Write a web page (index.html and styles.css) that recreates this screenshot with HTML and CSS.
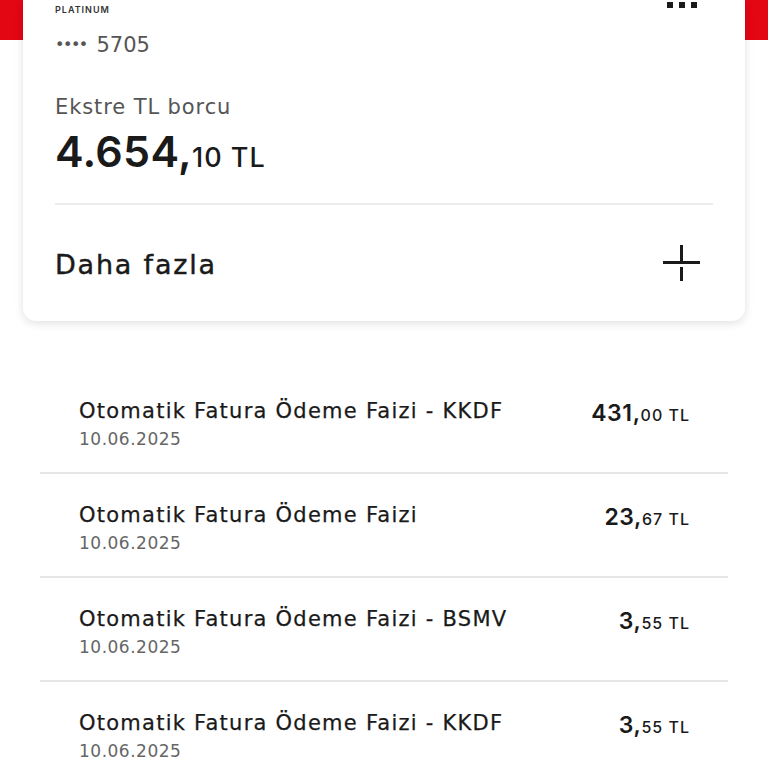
FILE: index.html
```html
<!DOCTYPE html>
<html lang="tr">
<head>
<meta charset="utf-8">
<title>Kart</title>
<link rel="stylesheet" href="styles.css">
</head>
<body>
<div class="page">
  <div class="band"></div>
  <section class="card">
    <div class="card-head">
      <span class="tier">PLATINUM</span>
      <span class="more"><i></i><i></i><i></i></span>
    </div>
    <div class="cardno"><span class="mask">••••</span> 5705</div>
    <div class="label">Ekstre TL borcu</div>
    <div class="debt"><span class="big">4.654,</span><span class="small">10 TL</span></div>
    <div class="sep"></div>
    <div class="more-row">
      <span class="more-text">Daha fazla</span>
      <svg class="plus" width="38" height="38" viewBox="0 0 38 38">
        <rect x="0" y="16" width="37" height="3" fill="#1a1a1a"/>
        <rect x="17" y="0" width="3" height="18" fill="#1a1a1a"/>
        <rect x="17" y="22" width="3" height="14" fill="#1a1a1a"/>
      </svg>
    </div>
  </section>

  <ul class="list">
    <li class="row">
      <div class="info">
        <div class="title">Otomatik Fatura Ödeme Faizi - KKDF</div>
        <div class="date">10.06.2025</div>
      </div>
      <div class="amount"><span class="int">431,</span><span class="dec">00 TL</span></div>
    </li>
    <li class="row">
      <div class="info">
        <div class="title">Otomatik Fatura Ödeme Faizi</div>
        <div class="date">10.06.2025</div>
      </div>
      <div class="amount"><span class="int">23,</span><span class="dec">67 TL</span></div>
    </li>
    <li class="row">
      <div class="info">
        <div class="title">Otomatik Fatura Ödeme Faizi - BSMV</div>
        <div class="date">10.06.2025</div>
      </div>
      <div class="amount"><span class="int">3,</span><span class="dec">55 TL</span></div>
    </li>
    <li class="row">
      <div class="info">
        <div class="title">Otomatik Fatura Ödeme Faizi - KKDF</div>
        <div class="date">10.06.2025</div>
      </div>
      <div class="amount"><span class="int">3,</span><span class="dec">55 TL</span></div>
    </li>
  </ul>
</div>
</body>
</html>
```

FILE: styles.css
```css
* { box-sizing: border-box; }
html, body { margin: 0; padding: 0; background: #ffffff; }
body {
  font-family: "DejaVu Sans", "Inter", sans-serif;
  color: #1a1a1a;
  width: 768px;
  overflow: hidden;
}
.page { width: 768px; }
.band { height: 40px; background: #e30613; }
.card {
  margin: -40px 23px 0 23px;
  background: #ffffff;
  border-radius: 0 0 13px 13px;
  box-shadow: 0 2px 10px rgba(0,0,0,0.13);
  padding: 0 32px 0 32px;
  height: 321px;
}
.card-head {
  display: flex;
  justify-content: space-between;
  align-items: flex-start;
  height: 20px;
}
.tier {
  font-family: "Inter", sans-serif;
  font-size: 9px;
  font-weight: 600;
  letter-spacing: 1px;
  color: #333;
  line-height: 12px;
  margin-top: 4px;
}
.more { display: flex; gap: 6px; margin: 2px 16px 0 0; }
.more i { display: block; width: 6px; height: 6px; background: #1a1a1a; }
.cardno {
  font-size: 21px;
  color: #555;
  line-height: 28px;
  margin-top: 11px;
}
.mask { font-size: 16px; letter-spacing: -1.5px; margin-right: 3px; position: relative; top: -2px; }
.label {
  font-size: 21px;
  color: #555;
  line-height: 28px;
  margin-top: 32px;
  letter-spacing: 0.9px;
}
.debt { margin-top: 6px; line-height: 48px; color: #1a1a1a; font-family: "Inter", sans-serif; }
.big { font-size: 43px; font-weight: 600; letter-spacing: 0.3px; }
.small { font-size: 27px; font-weight: 500; letter-spacing: 1px; }
.sep { height: 2px; background: #ececec; margin-top: 18px; }
.more-row {
  display: flex;
  justify-content: space-between;
  align-items: center;
  height: 118px;
}
.more-text { font-size: 27px; font-weight: 400; color: #1a1a1a; letter-spacing: 1.8px; -webkit-text-stroke: 0.45px #1a1a1a; }
.plus { margin-right: 12px; margin-top: 0; }
.list { list-style: none; margin: 49px 40px 0 40px; padding: 0; }
.row {
  display: flex;
  justify-content: space-between;
  align-items: flex-start;
  height: 104px;
  border-bottom: 2px solid #e6e6e6;
  padding: 28px 38px 0 39px;
}
.title { font-size: 21px; font-weight: 400; line-height: 26px; color: #1a1a1a; letter-spacing: 1.25px; -webkit-text-stroke: 0.25px #1a1a1a; }
.date { font-size: 17px; line-height: 24px; color: #666; margin-top: 3px; letter-spacing: 0.5px; }
.amount { line-height: 26px; padding-top: 2px; white-space: nowrap; font-family: "Inter", sans-serif; }
.int { font-size: 23px; font-weight: 600; letter-spacing: 0.6px; }
.dec { font-size: 16px; font-weight: 500; letter-spacing: 1px; }
```
